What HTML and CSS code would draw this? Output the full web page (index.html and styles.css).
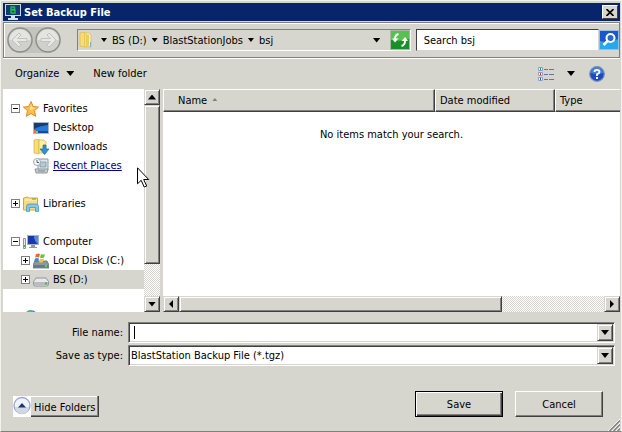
FILE: index.html
```html
<!DOCTYPE html>
<html lang="en">
<head>
    <meta charset="UTF-8">
    <meta name="viewport" content="width=device-width, initial-scale=1.0">
    <title>Set Backup File</title>
    <link rel="stylesheet" href="styles.css">
</head>
<body>
    <div class="dialog">
        <header class="titlebar">
            <svg class="icon" viewBox="0 0 16 16">
                <path d="M0 0h16v12H0z" fill="#c8dce8"/>
                <path d="M1 1h14v10H1z" fill="#103c78"/>
                <path d="M6 12h4v2h3v2H3v-2h3z" fill="#d8e0e8"/>
                <path d="M6 2.500v7M6 3h3.500v2.500H6M6 6h4v3H6" fill="none" stroke="#20c040" stroke-width="1.400"/>
            </svg>
            <h1>Set Backup File</h1>
            <button class="close" aria-label="Close">
                <svg width="8" height="7" viewBox="0 0 8 7"><path d="M.5 0l7 7M7.500 0l-7 7" stroke="#000" stroke-width="1.600"/></svg>
            </button>
        </header>

        <nav class="navbar">
            <div class="history">
                <button aria-label="Back">
                    <svg viewBox="0 0 26 26">
                        <circle cx="13" cy="13" r="12" fill="#d0d1cc" stroke="#8c8e8c" stroke-width="1.400"/>
                        <path d="M2.500 13a10.500 10.500 0 0 1 21 0z" fill="#e4e5e1"/>
                        <path d="M12 6l-7 7 7 7 2-2-3.500-3.500H20v-3h-9.500L14 8z" fill="#e8e9e6" stroke="#c0c2be"/>
                    </svg>
                </button>
                <button aria-label="Forward">
                    <svg viewBox="0 0 26 26">
                        <circle cx="13" cy="13" r="12" fill="#d0d1cc" stroke="#8c8e8c" stroke-width="1.400"/>
                        <path d="M2.500 13a10.500 10.500 0 0 1 21 0z" fill="#e4e5e1"/>
                        <path d="M14 6l7 7-7 7-2-2 3.500-3.500H6v-3h9.500L12 8z" fill="#e8e9e6" stroke="#c0c2be"/>
                    </svg>
                </button>
            </div>
            <div class="address">
                <svg class="icon folder" viewBox="0 0 16 16">
                    <path d="M2 1l5-1v15l-5-1z" fill="#f8dc78" stroke="#e0b848" stroke-width=".7"/>
                    <path d="M7 1h4l2 2v12H7z" fill="#fff0a8" stroke="#e0b848" stroke-width=".7"/>
                    <path d="M8 2l3 1v12l-3 1z" fill="#f0cc60"/>
                    <path d="M12 10h1v5h-1z" fill="#60b8d8"/>
                </svg>
                <span class="arrow small"></span>
                <a href="#">BS (D:)</a>
                <span class="arrow small"></span>
                <a href="#">BlastStationJobs</a>
                <span class="arrow small"></span>
                <a href="#">bsj</a>
                <button class="history-list" aria-label="Previous locations"><span class="arrow"></span></button>
                <button class="refresh" aria-label="Refresh">
                    <svg viewBox="0 0 20 20">
                        <path d="M0 0h20v20H0z" fill="#a8b8a0"/>
                        <path d="M1 1h18v18H1z" fill="#189028"/>
                        <path d="M1 1h18v8q-9 3-18 1z" fill="#58c050"/>
                        <path d="M8.500 4Q5 5 5 9M11.500 16q3.500-1 3.500-5" fill="none" stroke="#fff" stroke-width="2"/>
                        <path d="M2 8.500h6.500L5 12.500zM11.500 11H18l-3-4z" fill="#fff"/>
                    </svg>
                </button>
            </div>
            <div class="search">
                <input type="text" value="Search bsj" aria-label="Search">
                <button aria-label="Search">
                    <svg viewBox="0 0 20 20">
                        <path d="M0 0h20v20H0z" fill="#90c0f0"/>
                        <path d="M1 1h18v18H1z" fill="#1858c8"/>
                        <path d="M1 11q9 3 18-2v10H1z" fill="#28a8e8"/>
                        <circle cx="11.500" cy="8" r="4" fill="#2868d0" stroke="#fff" stroke-width="2"/>
                        <path d="M8.500 11l-4 4" stroke="#fff" stroke-width="2.500"/>
                    </svg>
                </button>
            </div>
        </nav>

        <div class="toolbar">
            <button>Organize <span class="arrow"></span></button>
            <button>New folder</button>
            <button class="views" aria-label="Change your view">
                <svg width="16" height="14" viewBox="0 0 16 14">
                    <path d="M.5.500h4v3h-4zM.500 5.500h4v3h-4zM.500 10.500h4v3h-4z" fill="#fff" stroke="#88a0c8"/>
                    <path d="M2 1h1v2H2z" fill="#20a040"/>
                    <path d="M2 6h1v2H2z" fill="#e02020"/>
                    <path d="M2 11h1v2H2z" fill="#2050d0"/>
                    <path d="M6 2.500h4M11 2.500h5M6 7.500h4M11 7.500h5M6 12.500h4M11 12.500h5" stroke="#607898"/>
                </svg>
                <span class="arrow"></span>
            </button>
            <button aria-label="Help">
                <svg class="icon" viewBox="0 0 16 16">
                    <circle cx="8" cy="8" r="7.300" fill="#1c4cb8" stroke="#7890c0" stroke-width="1.200"/>
                    <path d="M2 7a6 6 0 0 1 12 0q-6 2-12 0z" fill="#4880d8"/>
                    <path d="M5.500 6Q5.500 3.800 8 3.800T10.500 6Q10.500 7.300 8 8.300V10" fill="none" stroke="#fff" stroke-width="1.800"/>
                    <path d="M7 11h2v2H7z" fill="#fff"/>
                </svg>
            </button>
        </div>

        <main class="browser">
            <aside class="sidebar">
                <ul class="tree">
                    <li>
                        <button class="toggle" aria-label="Collapse"></button>
                        <svg class="icon" viewBox="0 0 16 16"><path d="M8 .5l2.200 5 5.300.6-4 3.600 1.200 5.600L8 12.500l-4.700 2.800 1.200-5.600-4-3.600 5.300-.6z" fill="#fcc050" stroke="#e08828"/><path d="M8 3l1.300 3.500L12 7l-5 2z" fill="#ffe8a0"/></svg>
                        <span>Favorites</span>
                    </li>
                    <li class="child">
                        <svg class="icon" viewBox="0 0 16 16"><path d="M0 2h16v12H0z" fill="#a8b8c8"/><path d="M1 3h14v10H1z" fill="#2878d8"/><path d="M1 3h14v2Q6 6 1 9z" fill="#183c70"/><path d="M1 11h14v2H1z" fill="#204890"/><path d="M1 10h2v3H1z" fill="#f07030"/><path d="M3 11h2v2H3z" fill="#60d080"/></svg>
                        <span>Desktop</span>
                    </li>
                    <li class="child">
                        <svg class="icon" viewBox="0 0 16 16"><path d="M1 1l5-1v15l-5-1z" fill="#f8dc78" stroke="#d8b048" stroke-width=".7"/><path d="M6 1h5l2 2v11H6z" fill="#fff0a8" stroke="#d8b048" stroke-width=".7"/><path d="M10 6h3v4h3l-4.500 5.500L7 10h3z" fill="#3090e0" stroke="#1868b0" stroke-width=".7"/></svg>
                        <span>Downloads</span>
                    </li>
                    <li class="child">
                        <svg class="icon" viewBox="0 0 16 16"><path d="M5 1h10v11H5z" fill="#e0e8ec" stroke="#90989c"/><path d="M7 4h6v5H7z" fill="#b0ccd8" stroke="#789098" stroke-width=".7"/><path d="M2 11h13l-1 4H3z" fill="#c8ced0" stroke="#90989c"/><circle cx="4" cy="4" r="3.500" fill="#f4f6f8" stroke="#a0acb8"/><path d="M4 2v2.500h2" fill="none" stroke="#506070"/><path d="M5 13h7" stroke="#808890"/></svg>
                        <a href="#">Recent Places</a>
                    </li>
                    <li class="group">
                        <button class="toggle plus" aria-label="Expand"></button>
                        <svg class="icon" viewBox="0 0 16 16"><path d="M.500 2l4-1 2 1h8v12H.500z" fill="#f8dc80" stroke="#c8a850"/><path d="M2 4h12" stroke="#fff4c0"/><path d="M9 3h4" stroke="#50a850"/><path d="M3.500 15.500v-5q0-2.500 2.500-2.500h7q2.500 0 2.500 2.500v5h-3v-4h-6v4z" fill="#80c8e8" stroke="#4898c0" stroke-width=".8"/></svg>
                        <span>Libraries</span>
                    </li>
                    <li class="group">
                        <button class="toggle" aria-label="Collapse"></button>
                        <svg class="icon" viewBox="0 0 16 16"><path d="M4 1h12v10H4z" fill="#a8b0c8"/><path d="M5 2h10v8H5z" fill="#1838b0"/><path d="M11 2h4v8q-4-3-4-8z" fill="#5888e0"/><path d="M8 11h4v2h2v1H6v-1h2z" fill="#9098a8"/><path d="M.500 4.500h2v10h-2z" fill="#e8e8e8" stroke="#909498"/><path d="M1 11h1v2H1z" fill="#30b840"/></svg>
                        <span>Computer</span>
                    </li>
                    <li class="drive">
                        <button class="toggle plus" aria-label="Expand"></button>
                        <svg class="icon" viewBox="0 0 16 16"><path d="M2 8h12l2 4v3H0v-3z" fill="#8c98a0" stroke="#586068" stroke-width=".7"/><path d="M1 12h14v2.500H1z" fill="#687888"/><path d="M12 12h2v2h-2z" fill="#40e060"/><path d="M3 1q2-1 4 0L6 4.500q-2-1-4 0z" fill="#f06828"/><path d="M8 1q2 1 4 0l-1 3.500q-2 1-4 0z" fill="#70c040"/><path d="M2 5.500q2-1 4 0L5 9Q3 8 1 9z" fill="#3888e0"/><path d="M7 5.500q2 1 4 0L10 9Q8 10 6 9z" fill="#f8c828"/></svg>
                        <span>Local Disk (C:)</span>
                    </li>
                    <li class="drive selected">
                        <button class="toggle plus" aria-label="Expand"></button>
                        <svg class="icon" viewBox="0 0 16 16"><path d="M3 6h10l2.500 3.500v3q0 1.500-2 1.500h-11q-2 0-2-1.500v-3z" fill="#e8e8e8" stroke="#808488" stroke-width=".8"/><path d="M1 10h14v3H1z" fill="#b8bcc0"/><path d="M12 10.500h2v2h-2z" fill="#40b840"/></svg>
                        <span>BS (D:)</span>
                    </li>
                    <li class="group">
                        <svg class="icon network" viewBox="0 0 16 16"><circle cx="8" cy="7" r="7" fill="#48a8e0"/><path d="M3 3q3-4 5-2L6 5H2z" fill="#48c060"/><path d="M10 1l3 3h-3z" fill="#1860b0"/></svg>
                    </li>
                </ul>
                <div class="scrollbar vertical">
                    <button aria-label="Scroll up"><span class="arrow up"></span></button>
                    <div class="thumb"></div>
                    <div class="track"></div>
                    <button aria-label="Scroll down"><span class="arrow"></span></button>
                </div>
            </aside>

            <section class="files">
                <table>
                    <thead>
                        <tr>
                            <th class="name">Name <span class="arrow up sort"></span></th>
                            <th class="date">Date modified</th>
                            <th class="type">Type</th>
                        </tr>
                    </thead>
                    <tbody>
                        <tr><td colspan="3">No items match your search.</td></tr>
                    </tbody>
                </table>
                <div class="scrollbar horizontal">
                    <button aria-label="Scroll left"><span class="arrow left"></span></button>
                    <div class="thumb"></div>
                    <div class="track"></div>
                    <button aria-label="Scroll right"><span class="arrow right"></span></button>
                </div>
            </section>

            <svg class="pointer" width="13" height="21" viewBox="0 0 13 21">
                <path d="M.500.800v16l3.700-3.500 3 6.700 2.500-1-3-6.500h5z" fill="#fff" stroke="#000"/>
            </svg>
        </main>

        <form class="fields">
            <label for="fileName">File name:</label>
            <div class="combo">
                <span class="caret"></span>
                <input type="text" id="fileName">
                <button type="button" class="drop" aria-label="Show names"><span class="arrow"></span></button>
            </div>
            <label for="fileType">Save as type:</label>
            <div class="combo">
                <select id="fileType">
                    <option>BlastStation Backup File (*.tgz)</option>
                </select>
                <span class="drop"><span class="arrow"></span></span>
            </div>
        </form>

        <footer class="actions">
            <button class="hide-folders">
                <svg width="18" height="21" viewBox="0 0 18 21">
                    <path d="M0 0h18v21H0z" fill="#fff"/>
                    <circle cx="9" cy="9.500" r="8" fill="#f0f4fa" stroke="#98a4d0" stroke-width="1.300"/>
                    <path d="M2 11h14a7 7 0 0 1-14 0z" fill="#d0d8e0"/>
                    <path d="M5 11.500L9 7l4 4.500z" fill="#183878"/>
                </svg>
                <span>Hide Folders</span>
            </button>
            <button class="action default">Save</button>
            <button class="action">Cancel</button>
        </footer>
        <svg class="grip" width="12" height="12" viewBox="0 0 12 12">
            <path d="M0 12L12 0M4 12l8-8M8 12l4-4" stroke="#fff"/>
            <path d="M1.500 12L12 1.500M5.500 12L12 5.500M9.500 12L12 9.500" stroke="#808080" stroke-width="1.500"/>
        </svg>
    </div>
</body>
</html>
```

FILE: styles.css
```css
* {
    box-sizing: border-box;
}
body {
    margin: 0;
    font-family: "DejaVu Sans Condensed", Tahoma, sans-serif;
    font-size: 11px;
    line-height: 13px;
    color: #000;
}
button, input, select {
    font: inherit;
    color: inherit;
    margin: 0;
    padding: 0;
    border: none;
    border-radius: 0;
    background: none;
}
svg {
    display: block;
    flex: none;
}
.icon {
    width: 16px;
    height: 16px;
}
.dialog {
    position: relative;
    display: flex;
    flex-direction: column;
    min-height: 100vh;
    padding: 2px 1px 0 2px;
    background-color: #d6d6ce;
    border: 1px solid #f2f2ee;
    border-bottom-color: #808080;
}

/* arrows */
.arrow {
    display: block;
    flex: none;
    width: 8px;
    height: 5px;
    background-color: #000;
    clip-path: polygon(0 0, 100% 0, 50% 100%);
}
.arrow.small {
    width: 6px;
    height: 4px;
}
.arrow.up {
    clip-path: polygon(50% 0, 100% 100%, 0 100%);
}
.arrow.left {
    width: 4px;
    height: 8px;
    clip-path: polygon(0 50%, 100% 0, 100% 100%);
}
.arrow.right {
    width: 4px;
    height: 8px;
    clip-path: polygon(0 0, 100% 50%, 0 100%);
}

/* title bar */
.titlebar {
    display: flex;
    align-items: center;
    gap: 3px;
    height: 18px;
    padding: 0 2px;
    background-color: #08246b;
    color: #fff;
}
.titlebar h1 {
    flex: 1;
    margin: 0;
    font-size: 11px;
    font-weight: bold;
}
.close {
    display: flex;
    align-items: center;
    justify-content: center;
    width: 16px;
    height: 14px;
    background-color: #d6d6ce;
    border: 1px solid;
    border-color: #fff #404040 #404040 #fff;
}

/* back, address and search */
.navbar {
    display: flex;
    align-items: center;
    height: 36px;
    margin-top: 1px;
    padding-left: 3px;
    border: 1px solid #808080;
    box-shadow: inset 1px 1px #fff, 0 1px #fff;
}
.history {
    display: flex;
    gap: 2px;
    margin-right: 16px;
    background-color: #c4c4be;
    border-radius: 13px;
}
.history svg {
    width: 26px;
    height: 26px;
}
.address {
    display: flex;
    flex: 331;
    align-items: center;
    gap: 5px;
    height: 22px;
    border: 1px solid;
    border-color: #808080 #fff #fff #808080;
}
.address a {
    color: #000;
    text-decoration: none;
}
.folder {
    margin-right: 2px;
}
.history-list {
    margin-left: auto;
    padding: 4px;
}
.refresh svg, .search svg {
    width: 20px;
    height: 20px;
}
.search {
    display: flex;
    flex: 203;
    height: 22px;
    margin-left: 5px;
    align-items: center;
}
.search input {
    flex: 1;
    min-width: 0;
    height: 22px;
    padding: 0 7px;
    background-color: #fff;
    border: 1px solid;
    border-color: #404040 #d6d6ce #d6d6ce #404040;
}

/* toolbar */
.toolbar {
    display: flex;
    align-items: center;
    height: 31px;
    padding: 0 15px 0 12px;
    gap: 19px;
}
.toolbar button {
    display: flex;
    align-items: center;
    gap: 7px;
}
.toolbar .views {
    gap: 13px;
    margin-left: auto;
    margin-right: -5px;
}

/* folder tree */
.browser {
    position: relative;
    display: flex;
    flex: 1;
    gap: 3px;
    min-height: 223px;
}
.sidebar {
    display: flex;
    width: 157px;
    background-color: #fff;
}
.tree {
    flex: 1;
    height: 223px;
    margin: 0;
    padding: 10px 0 0;
    overflow: hidden;
    list-style: none;
    white-space: nowrap;
}
.tree li {
    display: flex;
    align-items: center;
    gap: 4px;
    height: 19px;
    padding-left: 8px;
}
.tree li .toggle {
    margin-right: -1px;
}
.tree li.child {
    padding-left: 30px;
}
.tree li.drive {
    padding-left: 18px;
}
.tree li.group {
    margin-top: 19px;
}
.tree li.selected {
    background-color: #d6d6ce;
}
.tree a {
    color: #000080;
}
.toggle {
    width: 9px;
    height: 9px;
    border: 1px solid #808080;
    background: linear-gradient(#000, #000) center / 5px 1px no-repeat #fff;
}
.toggle.plus {
    background: linear-gradient(#000, #000) center / 5px 1px no-repeat, linear-gradient(#000, #000) center / 1px 5px no-repeat #fff;
}
.network {
    margin-left: 12px;
}

/* scrollbars */
.scrollbar {
    display: flex;
    flex: none;
}
.scrollbar.vertical {
    flex-direction: column;
    width: 16px;
}
.scrollbar.horizontal {
    height: 16px;
}
.scrollbar button, .thumb, .drop {
    background-color: #d6d6ce;
    border: 1px solid;
    border-color: #d6d6ce #404040 #404040 #d6d6ce;
    box-shadow: inset 1px 1px #fff, inset -1px -1px #808080;
}
.scrollbar button {
    display: flex;
    flex: none;
    align-items: center;
    justify-content: center;
    width: 16px;
    height: 16px;
}
.track {
    background: repeating-conic-gradient(#fff 0 25%, #d6d6ce 0 50%) 0 0 / 2px 2px;
}
.vertical .thumb {
    flex: 159;
}
.vertical .track {
    flex: 32;
}
.horizontal .thumb {
    flex: 323;
}
.horizontal .track {
    flex: 102;
}

/* file list */
.files {
    display: flex;
    flex: 1;
    flex-direction: column;
    justify-content: space-between;
    background-color: #fff;
}
.files table {
    width: 100%;
    table-layout: fixed;
    border-collapse: separate;
    border-spacing: 0;
}
.files th {
    height: 23px;
    padding: 0 4px;
    font-weight: normal;
    text-align: left;
    background-color: #d6d6ce;
    border: 1px solid;
    border-color: #fff #404040 #404040 #fff;
    box-shadow: inset -1px -1px #808080;
}
.files th.name {
    padding-left: 14px;
}
.files th.date {
    width: 120px;
}
.files th.type {
    width: 65px;
    border-right: none;
    box-shadow: inset 0 -1px #808080;
}
.files td {
    padding: 16px 0;
    text-align: center;
}
.sort {
    display: inline-block;
    width: 5px;
    height: 3px;
    margin-left: 2px;
    vertical-align: 3px;
    background-color: #808080;
}
.pointer {
    position: absolute;
    left: 134px;
    top: 78px;
}

/* file name and type */
.fields {
    display: grid;
    grid-template-columns: 120px 1fr;
    align-items: center;
    gap: 2px 5px;
    padding: 10px 5px 0 0;
}
.fields label {
    text-align: right;
}
.combo {
    position: relative;
    display: flex;
    align-items: center;
    height: 21px;
    background-color: #fff;
    border: 1px solid;
    border-color: #808080 #fff #fff #808080;
    box-shadow: inset 1px 1px #404040, inset -1px -1px #d6d6ce;
}
.combo input, .combo select {
    flex: 1;
    min-width: 0;
    height: 17px;
    padding-left: 2px;
    appearance: none;
    outline: none;
}
.caret {
    width: 1px;
    height: 13px;
    margin-left: 5px;
    background-color: #000;
}
.drop {
    position: absolute;
    top: 1px;
    right: 1px;
    display: flex;
    align-items: center;
    justify-content: center;
    width: 16px;
    height: 17px;
    pointer-events: none;
}
button.drop {
    pointer-events: auto;
}

/* bottom buttons */
.actions {
    display: flex;
    align-items: center;
    gap: 12px;
    padding: 25px 17px 14px 10px;
}
.hide-folders {
    display: flex;
    align-items: center;
    align-self: flex-end;
    height: 21px;
    margin-right: auto;
    border: solid #404040;
    border-width: 0 1px 1px 0;
    box-shadow: inset -1px -1px #808080, inset 0 1px #fff;
}
.hide-folders svg {
    height: 21px;
}
.hide-folders span {
    padding: 2px 3px 0;
}
.action {
    width: 88px;
    height: 26px;
    border: 1px solid;
    border-color: #fff #404040 #404040 #fff;
    box-shadow: inset -1px -1px #808080;
}
.action.default {
    border-color: #000;
    box-shadow: inset 1px 1px #fff, inset -1px -1px #404040, inset -2px -2px #808080;
}
.grip {
    position: absolute;
    right: 1px;
    bottom: 0;
}
```
